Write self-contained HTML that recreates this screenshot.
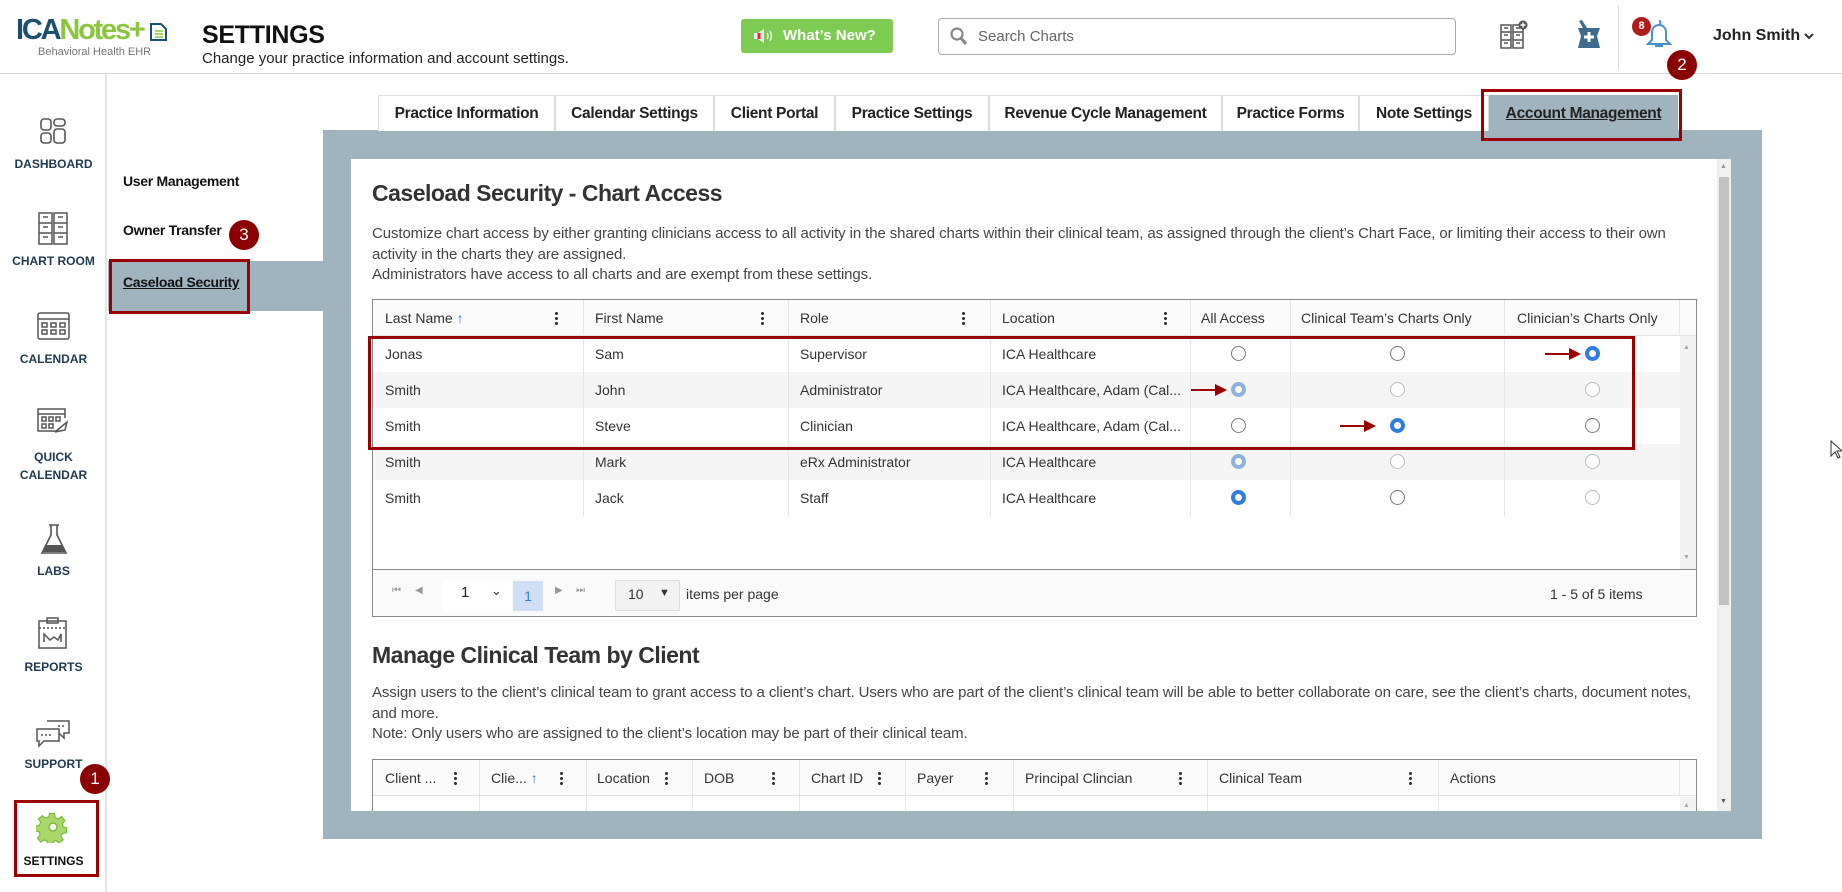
<!DOCTYPE html>
<html><head><meta charset="utf-8">
<style>
*{box-sizing:border-box;margin:0;padding:0}
body{width:1842px;height:892px;overflow:hidden;background:#fff;font-family:"Liberation Sans",sans-serif;color:#333;position:relative}
.a{position:absolute}
.hdr{left:0;top:0;width:1842px;height:74px;border-bottom:1px solid #d8d8d8}
.side{left:0;top:74px;width:107px;height:818px;border-right:2px solid #e4e4e4}
.nav{position:absolute;width:107px;text-align:center;font-size:12px;font-weight:bold;color:#1e3a4e}
.badge{position:absolute;width:30px;height:30px;border-radius:50%;background:#8b0000;color:#fff;font-size:17px;text-align:center;line-height:30px}
.tab{position:absolute;top:95px;height:36px;border:1px solid #ddd;border-bottom:none;background:#fff;font-size:15.5px;font-weight:bold;color:#222;text-align:center;line-height:35px;letter-spacing:-0.3px}
.t{position:absolute;font-size:14px;color:#333;white-space:nowrap}
.hc{position:absolute;font-size:14px;color:#333;white-space:nowrap}
.dots{position:absolute;width:3px;height:15px;background:radial-gradient(circle,#333 1.4px,transparent 1.6px) 0 0/3px 5px repeat-y}
.r{position:absolute;width:15px;height:15px;border-radius:50%;border:1px solid #777;background:#fff}
.r.l{border-color:#bbb}
.r.s{border:4px solid #2f7de1}
.r.ls{border:4px solid #8fb1de}
.vl{position:absolute;width:1px;background:#e6e6e6}
.sub{position:absolute;left:123px;font-size:14px;font-weight:bold;color:#111;letter-spacing:-0.3px}
.para{position:absolute;left:21px;white-space:nowrap;font-size:15px;line-height:20.5px;color:#444;letter-spacing:-0.1px}
</style></head><body>

<!-- header -->
<div class="a hdr"></div>
<div class="a" style="left:16px;top:12px;font-size:29px;font-weight:bold;letter-spacing:-2.2px;line-height:36px"><span style="color:#1b4f6e">ICA</span><span style="color:#8bc53f">Notes+</span></div>
<svg class="a" style="left:148px;top:20px" width="20" height="22" viewBox="0 0 20 22"><path d="M3 4h10l5 5v11H3z" fill="#fff" stroke="#1b4f6e" stroke-width="2"/><path d="M7 11h8M7 14h8M7 17h8" stroke="#8bc53f" stroke-width="1.5"/></svg>
<div class="a" style="left:38px;top:46px;font-size:11px;color:#777">Behavioral Health EHR</div>
<div class="a" style="left:202px;top:21px;font-size:25px;font-weight:bold;color:#111;letter-spacing:-0.3px">SETTINGS</div>
<div class="a" style="left:202px;top:50px;font-size:15px;color:#222">Change your practice information and account settings.</div>
<div class="a" style="left:741px;top:19px;width:152px;height:34px;background:#7dcb50;border-radius:3px;color:#fff;font-weight:bold;font-size:15px;line-height:34px;padding-left:42px">What’s New?</div>
<svg class="a" style="left:752px;top:28px" width="22" height="16" viewBox="0 0 22 16"><path d="M2 5h4l6-4v14l-6-4H2z" fill="#f0f0f0"/><path d="M7 5v6" stroke="#e23" stroke-width="3"/><path d="M15 5q2 3 0 6M18 3q3 5 0 10" stroke="#fff" fill="none" stroke-width="1.3"/></svg>
<div class="a" style="left:938px;top:18px;width:518px;height:37px;border:1px solid #aaa;border-radius:4px"></div>
<svg class="a" style="left:950px;top:27px" width="18" height="20" viewBox="0 0 18 20"><circle cx="7" cy="7" r="5.5" fill="none" stroke="#888" stroke-width="2.2"/><path d="M11 11l5 6" stroke="#888" stroke-width="3"/></svg>
<div class="a" style="left:978px;top:28px;font-size:15px;color:#666">Search Charts</div>
<svg class="a" style="left:1500px;top:20px" width="28" height="30" viewBox="0 0 28 30"><g fill="none" stroke="#555" stroke-width="1.5"><rect x="1" y="5" width="10" height="23"/><rect x="13" y="5" width="10" height="23"/><path d="M1 12h10M1 20h10M13 12h10M13 20h10M4 8h4M4 15h4M4 23h4M16 8h4M16 15h4M16 23h4"/></g><circle cx="23" cy="5" r="4.5" fill="#555"/><path d="M23 2.5v5M20.5 5h5" stroke="#fff" stroke-width="1.4"/></svg>
<svg class="a" style="left:1575px;top:20px" width="28" height="30" viewBox="0 0 28 30"><path d="M3 8h22l-3 8 3 12H3l3-12z" fill="#3d6b8e"/><path d="M8 8L4 1l3-1 5 8" fill="#3d6b8e"/><path d="M14 12v10M9 17h10" stroke="#fff" stroke-width="3"/></svg>
<div class="a" style="left:1618px;top:5px;width:1px;height:64px;background:#ddd"></div>
<svg class="a" style="left:1644px;top:18px" width="30" height="32" viewBox="0 0 30 32"><path d="M15 3a1.5 1.5 0 0 1 0 3M8 22V14a7 7 0 0 1 14 0v8l4 4H4z" fill="none" stroke="#4a90c8" stroke-width="2"/><path d="M11 28h8" stroke="#4a90c8" stroke-width="2"/></svg>
<div class="a" style="left:1632px;top:17px;width:19px;height:19px;border-radius:50%;background:#b01c1c;color:#fff;font-size:11px;font-weight:bold;text-align:center;line-height:19px">8</div>
<div class="badge" style="left:1667px;top:50px">2</div>
<div class="a" style="left:1713px;top:27px;font-size:16px;font-weight:bold;color:#222">John Smith</div>
<svg class="a" style="left:1804px;top:32px" width="10" height="8" viewBox="0 0 10 8"><path d="M1 2l4 4 4-4" stroke="#333" stroke-width="2" fill="none"/></svg>

<!-- sidebar -->
<div class="a side"></div>
<svg class="a" style="left:40px;top:118px" width="26" height="26" viewBox="0 0 26 26"><g fill="none" stroke="#555" stroke-width="1.6"><rect x="1" y="1" width="10" height="11" rx="3"/><rect x="14" y="1" width="11" height="7" rx="3"/><rect x="1" y="15" width="10" height="10" rx="3"/><rect x="14" y="11" width="11" height="14" rx="3"/></g></svg>
<div class="nav" style="top:157px">DASHBOARD</div>
<svg class="a" style="left:38px;top:212px" width="31" height="33" viewBox="0 0 31 33"><g fill="none" stroke="#555" stroke-width="1.5"><rect x="1" y="1" width="13" height="31"/><rect x="16" y="1" width="13" height="31"/><path d="M1 11h13M1 21h13M16 11h13M16 21h13M5 5h5M5 15h5M5 25h5M20 5h5M20 15h5M20 25h5"/></g></svg>
<div class="nav" style="top:254px">CHART ROOM</div>
<svg class="a" style="left:37px;top:310px" width="33" height="30" viewBox="0 0 33 30"><g fill="none" stroke="#555" stroke-width="1.5"><rect x="1" y="3" width="31" height="26" rx="2"/><path d="M1 9h31"/><rect x="5" y="13" width="5" height="4"/><rect x="14" y="13" width="5" height="4"/><rect x="23" y="13" width="5" height="4"/><rect x="5" y="20" width="5" height="4"/><rect x="14" y="20" width="5" height="4"/><rect x="23" y="20" width="5" height="4"/></g></svg>
<div class="nav" style="top:352px">CALENDAR</div>
<svg class="a" style="left:37px;top:406px" width="33" height="30" viewBox="0 0 33 30"><g fill="none" stroke="#555" stroke-width="1.5"><path d="M28 12V3H1v22h18"/><path d="M1 8h27"/><rect x="5" y="11" width="4" height="4"/><rect x="12" y="11" width="4" height="4"/><rect x="19" y="11" width="4" height="4"/><rect x="5" y="18" width="4" height="4"/><rect x="12" y="18" width="4" height="4"/><path d="M18 26l12-10-2 8z"/></g></svg>
<div class="nav" style="top:448px;line-height:18px">QUICK<br>CALENDAR</div>
<svg class="a" style="left:40px;top:523px" width="28" height="34" viewBox="0 0 28 34"><path d="M9 2h10M11 2v10L2 30h24L17 12V2" fill="none" stroke="#555" stroke-width="1.6"/><path d="M6 22h16l3 7H3z" fill="#555"/></svg>
<div class="nav" style="top:564px">LABS</div>
<svg class="a" style="left:38px;top:617px" width="30" height="32" viewBox="0 0 30 32"><g fill="none" stroke="#555" stroke-width="1.5"><rect x="1" y="4" width="27" height="27"/><rect x="9" y="1" width="11" height="5"/><path d="M1 11h27" stroke-dasharray="2 2"/><path d="M6 25v-8l6 6 4-3 4 3 3-6v8"/></g></svg>
<div class="nav" style="top:660px">REPORTS</div>
<svg class="a" style="left:36px;top:718px" width="34" height="30" viewBox="0 0 34 30"><g fill="none" stroke="#555" stroke-width="1.5"><path d="M11 3h22v12h-5v5l-5-5"/><path d="M1 11h22v12H8l-5 5v-5H1z" fill="#fff"/><path d="M5 17h2M9 17h2M13 17h2M22 8h2M26 8h2"/></g></svg>
<div class="nav" style="top:757px">SUPPORT</div>
<div class="badge" style="left:80px;top:764px">1</div>
<div class="a" style="left:14px;top:800px;width:85px;height:77px;border:3px solid #9b0000"></div>
<svg class="a" style="left:36px;top:811px" width="34" height="32" viewBox="0 0 34 32"><path d="M14 1h6l1 5 4 2 4-3 4 5-3 4 1 4 4 1v6l-5 1-2 4 3 4-5 4-4-3-3 1-1 5h-6l-1-5-4-2-4 3-4-5 3-4-1-4-5-1v-6l5-1 2-4-3-4 5-4 4 3 4-2z" transform="scale(.8) translate(3,2)" fill="#a8d86a" stroke="#7cba3a" stroke-width="1.5"/><circle cx="17" cy="16" r="4" fill="#fff" stroke="#7cba3a" stroke-width="1.5"/></svg>
<div class="nav" style="top:854px;color:#111">SETTINGS</div>

<!-- submenu -->
<div class="sub" style="top:173px">User Management</div>
<div class="sub" style="top:222px">Owner Transfer</div>
<div class="badge" style="left:229px;top:220px">3</div>
<div class="a" style="left:108px;top:261px;width:216px;height:50px;background:#a0b4c0"></div>
<div class="a" style="left:109px;top:259px;width:141px;height:55px;border:3px solid #9b0000"></div>
<div class="sub" style="top:274px;text-decoration:underline">Caseload Security</div>

<!-- grey panel -->
<div class="a" style="left:323px;top:130px;width:1439px;height:709px;background:#a0b4c0"></div>

<!-- tabs -->
<div class="tab" style="left:378px;width:177px">Practice Information</div>
<div class="tab" style="left:555px;width:159px">Calendar Settings</div>
<div class="tab" style="left:714px;width:121px">Client Portal</div>
<div class="tab" style="left:835px;width:154px">Practice Settings</div>
<div class="tab" style="left:989px;width:233px">Revenue Cycle Management</div>
<div class="tab" style="left:1222px;width:137px">Practice Forms</div>
<div class="tab" style="left:1359px;width:130px">Note Settings</div>
<div class="tab" style="left:1489px;width:189px;background:#a0b4c0;text-decoration:underline;border-color:#a0b4c0">Account Management</div>
<div class="a" style="left:1481px;top:89px;width:201px;height:52px;border:3px solid #9b0000"></div>

<!-- white box -->
<div class="a" style="left:351px;top:159px;width:1380px;height:652px;background:#fff;overflow:hidden">
  <div class="a" style="left:1366px;top:0;width:14px;height:652px;background:#f0f0f0"></div>
  <div class="a" style="left:1368px;top:18px;width:10px;height:428px;background:#c1c1c1"></div>
  <div class="a" style="left:1369px;top:4px;font-size:7px;color:#999">▲</div>
  <div class="a" style="left:1369px;top:639px;font-size:7px;color:#555">▼</div>

  <div class="a" style="left:21px;top:21px;font-size:23px;font-weight:bold;color:#333;letter-spacing:-0.5px">Caseload Security - Chart Access</div>
  <div class="para" style="top:65px">Customize chart access by either granting clinicians access to all activity in the shared charts within their clinical team, as assigned through the client’s Chart Face, or limiting their access to their own<br>activity in the charts they are assigned.<br>Administrators have access to all charts and are exempt from these settings.</div>

  <!-- table 1 -->
  <div class="a" style="left:21px;top:140px;width:1325px;height:318px;border:1px solid #888;background:#fff">
    <div class="a" style="left:0;top:0;width:1323px;height:36px;background:#fafafa;border-bottom:1px solid #e2e2e2"></div>
    <div class="a" style="left:1307px;top:36px;width:16px;height:233px;background:#f3f3f3"></div>
    <div class="a" style="left:1310px;top:44px;font-size:7px;color:#aaa">▲</div>
    <div class="a" style="left:1310px;top:254px;font-size:7px;color:#aaa">▼</div>
    <div class="a" style="left:0;top:72px;width:1307px;height:36px;background:#f5f5f5"></div>
    <div class="a" style="left:0;top:144px;width:1307px;height:36px;background:#f5f5f5"></div>
    <div class="vl" style="left:210px;top:0;height:216px"></div>
    <div class="vl" style="left:415px;top:0;height:216px"></div>
    <div class="vl" style="left:617px;top:0;height:216px"></div>
    <div class="vl" style="left:817px;top:0;height:216px"></div>
    <div class="vl" style="left:917px;top:0;height:216px"></div>
    <div class="vl" style="left:1131px;top:0;height:216px"></div>
    <div class="vl" style="left:1306px;top:0;height:36px"></div>
    <div class="hc" style="left:12px;top:10px">Last Name <span style="color:#2f7de1">↑</span></div>
    <div class="dots" style="left:182px;top:11px"></div>
    <div class="hc" style="left:222px;top:10px">First Name</div>
    <div class="dots" style="left:388px;top:11px"></div>
    <div class="hc" style="left:427px;top:10px">Role</div>
    <div class="dots" style="left:589px;top:11px"></div>
    <div class="hc" style="left:629px;top:10px">Location</div>
    <div class="dots" style="left:791px;top:11px"></div>
    <div class="hc" style="left:828px;top:10px">All Access</div>
    <div class="hc" style="left:928px;top:10px">Clinical Team’s Charts Only</div>
    <div class="hc" style="left:1144px;top:10px">Clinician’s Charts Only</div>

    <div class="t" style="left:12px;top:46px">Jonas</div><div class="t" style="left:222px;top:46px">Sam</div><div class="t" style="left:427px;top:46px">Supervisor</div><div class="t" style="left:629px;top:46px">ICA Healthcare</div>
    <div class="t" style="left:12px;top:82px">Smith</div><div class="t" style="left:222px;top:82px">John</div><div class="t" style="left:427px;top:82px">Administrator</div><div class="t" style="left:629px;top:82px">ICA Healthcare, Adam (Cal...</div>
    <div class="t" style="left:12px;top:118px">Smith</div><div class="t" style="left:222px;top:118px">Steve</div><div class="t" style="left:427px;top:118px">Clinician</div><div class="t" style="left:629px;top:118px">ICA Healthcare, Adam (Cal...</div>
    <div class="t" style="left:12px;top:154px">Smith</div><div class="t" style="left:222px;top:154px">Mark</div><div class="t" style="left:427px;top:154px">eRx Administrator</div><div class="t" style="left:629px;top:154px">ICA Healthcare</div>
    <div class="t" style="left:12px;top:190px">Smith</div><div class="t" style="left:222px;top:190px">Jack</div><div class="t" style="left:427px;top:190px">Staff</div><div class="t" style="left:629px;top:190px">ICA Healthcare</div>

    <div class="r" style="left:858px;top:46px"></div><div class="r" style="left:1017px;top:46px"></div><div class="r s" style="left:1212px;top:46px"></div>
    <div class="r ls" style="left:858px;top:82px"></div><div class="r l" style="left:1017px;top:82px"></div><div class="r l" style="left:1212px;top:82px"></div>
    <div class="r" style="left:858px;top:118px"></div><div class="r s" style="left:1017px;top:118px"></div><div class="r" style="left:1212px;top:118px"></div>
    <div class="r ls" style="left:858px;top:154px"></div><div class="r l" style="left:1017px;top:154px"></div><div class="r l" style="left:1212px;top:154px"></div>
    <div class="r s" style="left:858px;top:190px"></div><div class="r" style="left:1017px;top:190px"></div><div class="r l" style="left:1212px;top:190px"></div>

    <!-- pager -->
    <div class="a" style="left:0;top:269px;width:1323px;height:47px;background:#fafafa;border-top:1px solid #888"></div>
    <div class="a" style="left:19px;top:285px;font-size:10px;color:#999">⏮</div>
    <div class="a" style="left:42px;top:285px;font-size:10px;color:#999">◀</div>
    <div class="a" style="left:70px;top:281px;width:69px;height:30px;background:#fff"></div>
    <div class="a" style="left:88px;top:284px;font-size:15px;color:#222">1</div>
    <div class="a" style="left:118px;top:283px;font-size:13px;color:#333">⌄</div>
    <div class="a" style="left:140px;top:281px;width:30px;height:30px;background:#cfdff5;color:#2f7de1;text-align:center;line-height:30px;font-size:14px">1</div>
    <div class="a" style="left:182px;top:285px;font-size:10px;color:#999">▶</div>
    <div class="a" style="left:203px;top:285px;font-size:10px;color:#999">⏭</div>
    <div class="a" style="left:242px;top:280px;width:65px;height:31px;background:#f3f3f3;border:1px solid #ddd;border-radius:2px"></div>
    <div class="a" style="left:255px;top:286px;font-size:14px;color:#333">10</div>
    <div class="a" style="left:286px;top:287px;font-size:11px;color:#333">▼</div>
    <div class="a" style="left:313px;top:286px;font-size:14px;color:#333">items per page</div>
    <div class="a" style="left:1177px;top:286px;font-size:14px;color:#333">1 - 5 of 5 items</div>
  </div>

  <!-- red box and arrows -->
  <div class="a" style="left:17px;top:177px;width:1267px;height:114px;border:3px solid #9b0000"></div>
  <svg class="a" style="left:1194px;top:188px" width="40" height="14"><path d="M0 6h24v-5l12 6-12 6v-5H0z" fill="#9b0000"/></svg>
  <svg class="a" style="left:840px;top:224px" width="40" height="14"><path d="M0 6h24v-5l12 6-12 6v-5H0z" fill="#9b0000"/></svg>
  <svg class="a" style="left:989px;top:260px" width="40" height="14"><path d="M0 6h24v-5l12 6-12 6v-5H0z" fill="#9b0000"/></svg>

  <div class="a" style="left:21px;top:483px;font-size:23px;font-weight:bold;color:#333;letter-spacing:-0.5px">Manage Clinical Team by Client</div>
  <div class="para" style="top:524px">Assign users to the client’s clinical team to grant access to a client’s chart. Users who are part of the client’s clinical team will be able to better collaborate on care, see the client’s charts, document notes,<br>and more.<br>Note: Only users who are assigned to the client’s location may be part of their clinical team.</div>

  <!-- table 2 -->
  <div class="a" style="left:21px;top:600px;width:1325px;height:80px;border:1px solid #888;background:#fff">
    <div class="a" style="left:0;top:0;width:1323px;height:36px;background:#fafafa;border-bottom:1px solid #e2e2e2"></div>
    <div class="a" style="left:1307px;top:36px;width:16px;height:40px;background:#f3f3f3"></div>
    <div class="a" style="left:1310px;top:42px;font-size:7px;color:#aaa">▲</div>
    <div class="vl" style="left:106px;top:0;height:60px"></div>
    <div class="vl" style="left:213px;top:0;height:60px"></div>
    <div class="vl" style="left:319px;top:0;height:60px"></div>
    <div class="vl" style="left:426px;top:0;height:60px"></div>
    <div class="vl" style="left:532px;top:0;height:60px"></div>
    <div class="vl" style="left:640px;top:0;height:60px"></div>
    <div class="vl" style="left:834px;top:0;height:60px"></div>
    <div class="vl" style="left:1065px;top:0;height:60px"></div>
    <div class="vl" style="left:1306px;top:0;height:36px"></div>
    <div class="hc" style="left:12px;top:10px">Client ...</div><div class="dots" style="left:81px;top:11px"></div>
    <div class="hc" style="left:118px;top:10px">Clie... <span style="color:#2f7de1">↑</span></div><div class="dots" style="left:187px;top:11px"></div>
    <div class="hc" style="left:224px;top:10px">Location</div><div class="dots" style="left:292px;top:11px"></div>
    <div class="hc" style="left:331px;top:10px">DOB</div><div class="dots" style="left:399px;top:11px"></div>
    <div class="hc" style="left:438px;top:10px">Chart ID</div><div class="dots" style="left:505px;top:11px"></div>
    <div class="hc" style="left:544px;top:10px">Payer</div><div class="dots" style="left:612px;top:11px"></div>
    <div class="hc" style="left:652px;top:10px">Principal Clincian</div><div class="dots" style="left:806px;top:11px"></div>
    <div class="hc" style="left:846px;top:10px">Clinical Team</div><div class="dots" style="left:1036px;top:11px"></div>
    <div class="hc" style="left:1077px;top:10px">Actions</div>
  </div>
</div>

<!-- cursor -->
<svg class="a" style="left:1830px;top:440px" width="12" height="20" viewBox="0 0 12 20"><path d="M1 1v15l4-4 3 6 2-1-3-6h5z" fill="#fff" stroke="#333" stroke-width="1"/></svg>
</body></html>
